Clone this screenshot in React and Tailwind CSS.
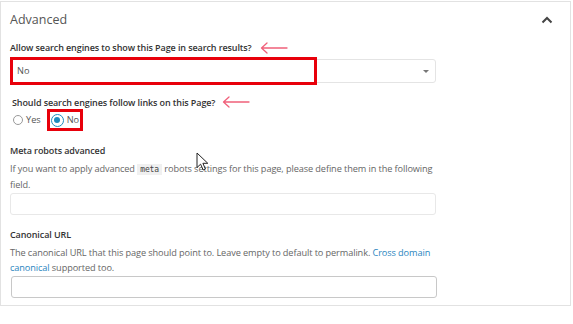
import React from "react";

function PinkArrow() {
	return (
		<svg width="28" height="12" viewBox="0 0 28 12" className="shrink-0">
			<path d="M27 6H2M7 1L1.5 6L7 11" fill="none" stroke="#f0607a" strokeWidth="1.3" strokeLinecap="round" strokeLinejoin="round" />
		</svg>
	);
}

function Cursor() {
	return (
		<svg width="13" height="19" viewBox="0 0 13 19" className="absolute left-[196px] top-[151px]">
			<path d="M1 1V15.5L4.6 12.2L7.2 18L9.4 17L6.9 11.3H11.8Z" fill="#fff" stroke="#222" strokeWidth="1" strokeLinejoin="round" />
		</svg>
	);
}

export default function App() {
	return (
		<div className="relative w-[573px] h-[324px] bg-white font-['Open_Sans',sans-serif] text-[#444]">
			<div className="mt-[1px] w-[571px] h-[305px] border border-[#e2e2e2] px-[9px]">
				<div className="flex items-center justify-between h-[36px]">
					<span className="text-[12.5px] text-[#555]">Advanced</span>
					<svg width="12" height="8" viewBox="0 0 12 8" className="mr-[8px]">
						<path d="M1.5 6.5L6 2L10.5 6.5" fill="none" stroke="#444" strokeWidth="2" />
					</svg>
				</div>

				<div className="flex items-center gap-[8px] mt-[1px] h-[17px]">
					<span className="text-[9px] leading-[13px] font-semibold text-[#333] tracking-[-0.1px]">Allow search engines to show this Page in search results?</span>
					<PinkArrow />
				</div>
				<div className="relative mt-[3px] w-[426px] h-[24px] border border-[#e4e4e4] rounded-[3px] flex items-center justify-between px-[6px]">
					<span className="text-[9.2px] text-[#555]">No</span>
					<span className="w-0 h-0 border-l-[3px] border-r-[3px] border-t-[3px] border-l-transparent border-r-transparent border-t-[#777]" />
					<div className="absolute left-[-1px] top-[-3px] w-[307px] h-[28px] border-[3px] border-[#e8000b]" />
				</div>

				<div className="flex items-center gap-[7px] mt-[11px] h-[16px] pl-[2px]">
					<span className="text-[9px] leading-[13px] font-semibold text-[#333] tracking-[-0.1px]">Should search engines follow links on this Page?</span>
					<PinkArrow />
				</div>
				<div className="flex items-center h-[22px] mt-[-1px] pl-[3px] text-[9.2px] text-[#555]">
					<span className="w-[10px] h-[10px] rounded-full border border-[#999]" />
					<span className="ml-[3px]">Yes</span>
					<div className="ml-[6px] flex items-center h-[22px] px-[1px] border-[3px] border-[#e8000b]">
						<span className="w-[13px] h-[13px] rounded-full border-[1.5px] border-[#1e8cbe] flex items-center justify-center">
							<span className="w-[6px] h-[6px] rounded-full bg-[#1e8cbe]" />
						</span>
						<span className="ml-[3px]">No</span>
					</div>
				</div>

				<div className="mt-[13px] text-[9px] leading-[13px] font-semibold text-[#333] tracking-[-0.1px]">Meta robots advanced</div>
				<p className="mt-[4px] text-[9.2px] leading-[16px] text-[#666] tracking-[-0.1px] w-[430px]">
					If you want to apply advanced <code className="px-[3px] py-[1px] leading-none bg-[#f0f0f0] font-['DejaVu_Sans_Mono',monospace] text-[8px] text-[#444]">meta</code> robots settings for this page, please define them in the following field.
				</p>
				<div className="mt-0 w-[426px] h-[22px] border border-[#e8e8e8] rounded-[3px]" />

				<div className="mt-[13px] text-[9px] leading-[13px] font-semibold text-[#333] tracking-[-0.1px]">Canonical URL</div>
				<p className="mt-[5px] text-[9.2px] leading-[14.5px] text-[#666] tracking-[-0.1px] w-[430px]">
					The canonical URL that this page should point to. Leave empty to default to permalink. <span className="text-[#2a86c0]">Cross domain canonical</span> supported too.
				</p>
				<div className="mt-[1px] ml-[1px] w-[426px] h-[22px] border border-[#c8c8c8] rounded-[3px]" />
			</div>
			<Cursor />
		</div>
	);
}
